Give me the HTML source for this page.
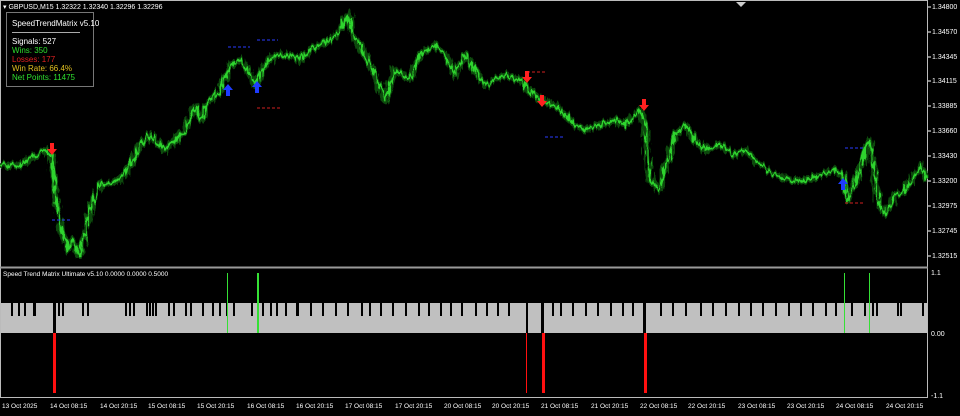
<!DOCTYPE html>
<html><head><meta charset="utf-8"><style>
body{margin:0;background:#000;width:960px;height:411px;overflow:hidden;font-family:"Liberation Sans",sans-serif}
svg text{font-family:"Liberation Sans",sans-serif}
</style></head><body>
<svg width="960" height="411" viewBox="0 0 960 411" xmlns="http://www.w3.org/2000/svg">
<defs>
<filter id="jag" x="-5%" y="-20%" width="110%" height="140%">
<feTurbulence type="fractalNoise" baseFrequency="0.35 0.08" numOctaves="2" seed="3"/>
<feDisplacementMap in="SourceGraphic" scale="10" xChannelSelector="R" yChannelSelector="G"/>
</filter>
</defs>
<rect width="960" height="411" fill="#000"/>
<rect x="0.5" y="0.5" width="927" height="397" fill="none" stroke="#bbb" stroke-width="1"/>
<line x1="0" y1="267.5" x2="928" y2="267.5" stroke="#9a9a9a" stroke-width="2"/>
<g fill="none" stroke-linejoin="round" filter="url(#jag)">
<polyline stroke="#0b4a0b" stroke-width="7" points="0,165 20,165 45,150 52,155 55,190 60,225 68,250 72,240 80,255 90,210 100,185 120,180 130,165 140,145 150,135 165,150 175,140 185,130 195,105 200,120 210,100 220,90 230,65 240,60 250,75 255,85 265,65 275,55 290,55 300,60 310,50 320,45 330,40 340,30 348,15 355,40 365,55 375,75 385,100 395,70 410,80 420,55 435,45 445,55 455,75 465,55 475,70 485,85 495,80 505,75 520,80 530,90 540,100 555,105 565,115 575,125 585,130 600,125 615,120 625,125 640,110 645,125 650,180 660,190 665,170 675,135 685,125 695,140 705,150 720,145 735,155 745,150 760,165 775,175 790,180 805,180 820,175 835,170 843,175 848,200 855,185 865,150 870,140 878,200 885,215 895,195 905,190 915,175 920,165 927,180"/>
<polyline stroke="#2fd42f" stroke-width="2.5" points="0,165 20,165 45,150 52,155 55,190 60,225 68,250 72,240 80,255 90,210 100,185 120,180 130,165 140,145 150,135 165,150 175,140 185,130 195,105 200,120 210,100 220,90 230,65 240,60 250,75 255,85 265,65 275,55 290,55 300,60 310,50 320,45 330,40 340,30 348,15 355,40 365,55 375,75 385,100 395,70 410,80 420,55 435,45 445,55 455,75 465,55 475,70 485,85 495,80 505,75 520,80 530,90 540,100 555,105 565,115 575,125 585,130 600,125 615,120 625,125 640,110 645,125 650,180 660,190 665,170 675,135 685,125 695,140 705,150 720,145 735,155 745,150 760,165 775,175 790,180 805,180 820,175 835,170 843,175 848,200 855,185 865,150 870,140 878,200 885,215 895,195 905,190 915,175 920,165 927,180"/>
</g>
<g stroke-width="1" stroke-dasharray="3,2">
<line x1="228" y1="47" x2="250" y2="47" stroke="#2a3cff"/>
<line x1="257" y1="40" x2="278" y2="40" stroke="#2a3cff"/>
<line x1="52" y1="220" x2="72" y2="220" stroke="#2a3cff"/>
<line x1="545" y1="137" x2="565" y2="137" stroke="#2a3cff"/>
<line x1="845" y1="148" x2="865" y2="148" stroke="#2a3cff"/>
<line x1="257" y1="108" x2="280" y2="108" stroke="#d02020"/>
<line x1="845" y1="203" x2="865" y2="203" stroke="#d02020"/>
<line x1="527" y1="72" x2="547" y2="72" stroke="#d02020"/>
</g>
<g fill="#ff2020">
<path d="M50,143h4v6h3l-5,6l-5,-6h3z"/>
<path d="M525,71h4v6h3l-5,6l-5,-6h3z"/>
<path d="M540,95h4v6h3l-5,6l-5,-6h3z"/>
<path d="M642,99h4v6h3l-5,6l-5,-6h3z"/>
</g>
<g fill="#1e3cff">
<path d="M226,96h4v-6h3l-5,-6l-5,6h3z"/>
<path d="M255,93h4v-6h3l-5,-6l-5,6h3z"/>
<path d="M841,190h4v-6h3l-5,-6l-5,6h3z"/>
</g>
<rect x="6.5" y="12.5" width="87" height="74" fill="#000" stroke="#777"/>
<g font-size="8">
<text x="3" y="9" fill="#fff" font-size="7">▾ GBPUSD,M15  1.32322 1.32340 1.32296 1.32296</text>
<text x="12" y="26" fill="#fff">SpeedTrendMatrix v5.10</text>
<line x1="12" y1="32.5" x2="80" y2="32.5" stroke="#aaa"/>
<text x="12" y="44" fill="#fff">Signals: 527</text>
<text x="12" y="53" fill="#2ee02e">Wins: 350</text>
<text x="12" y="62" fill="#e02020">Losses: 177</text>
<text x="12" y="71" fill="#e0c020">Win Rate: 66.4%</text>
<text x="12" y="80" fill="#2ee02e">Net Points: 11475</text>
</g>
<polygon points="736,2 746,2 741,7" fill="#ccc"/>
<rect x="1" y="303" width="926" height="30" fill="#c0c0c0"/>
<g fill="#000">
<rect x="11" y="303" width="2" height="13"/><rect x="18" y="303" width="2" height="13"/><rect x="24" y="303" width="2" height="13"/><rect x="33" y="303" width="3" height="13"/>
<rect x="53" y="303" width="3" height="30"/><rect x="58" y="303" width="2" height="13"/><rect x="62" y="303" width="2" height="13"/><rect x="82" y="303" width="2" height="13"/><rect x="87" y="303" width="2" height="13"/>
<rect x="125" y="303" width="2" height="13"/><rect x="129" y="303" width="2" height="13"/><rect x="133" y="303" width="2" height="13"/><rect x="146" y="303" width="2" height="13"/><rect x="149" y="303" width="2" height="13"/><rect x="152" y="303" width="2" height="13"/><rect x="155" y="303" width="2" height="13"/><rect x="168" y="303" width="2" height="13"/><rect x="173" y="303" width="2" height="13"/><rect x="185" y="303" width="2" height="13"/><rect x="190" y="303" width="2" height="13"/><rect x="202" y="303" width="2" height="13"/><rect x="212" y="303" width="2" height="13"/><rect x="219" y="303" width="2" height="13"/><rect x="226" y="303" width="2" height="13"/><rect x="233" y="303" width="2" height="13"/>
<rect x="251" y="303" width="2" height="13"/><rect x="262" y="303" width="2" height="13"/><rect x="270" y="303" width="2" height="13"/><rect x="276" y="303" width="2" height="13"/><rect x="285" y="303" width="2" height="13"/><rect x="296" y="303" width="3" height="13"/>
<rect x="310" y="303" width="2" height="13"/><rect x="322" y="303" width="2" height="13"/><rect x="335" y="303" width="2" height="13"/><rect x="347" y="303" width="2" height="13"/><rect x="361" y="303" width="2" height="13"/><rect x="369" y="303" width="2" height="13"/><rect x="380" y="303" width="2" height="13"/><rect x="392" y="303" width="2" height="13"/><rect x="405" y="303" width="2" height="13"/><rect x="418" y="303" width="2" height="13"/><rect x="428" y="303" width="2" height="13"/><rect x="440" y="303" width="2" height="13"/><rect x="450" y="303" width="2" height="13"/><rect x="461" y="303" width="2" height="13"/><rect x="475" y="303" width="2" height="13"/><rect x="486" y="303" width="2" height="13"/><rect x="497" y="303" width="2" height="13"/><rect x="508" y="303" width="2" height="13"/>
<rect x="526" y="303" width="2" height="30"/><rect x="541" y="303" width="3" height="30"/><rect x="552" y="303" width="2" height="13"/><rect x="560" y="303" width="2" height="13"/><rect x="572" y="303" width="2" height="13"/><rect x="585" y="303" width="2" height="13"/><rect x="597" y="303" width="2" height="13"/><rect x="610" y="303" width="2" height="13"/><rect x="622" y="303" width="2" height="13"/><rect x="632" y="303" width="2" height="13"/>
<rect x="643" y="303" width="3" height="30"/><rect x="660" y="303" width="2" height="13"/><rect x="672" y="303" width="2" height="13"/><rect x="685" y="303" width="2" height="13"/><rect x="700" y="303" width="2" height="13"/><rect x="712" y="303" width="2" height="13"/><rect x="725" y="303" width="2" height="13"/><rect x="738" y="303" width="2" height="13"/><rect x="750" y="303" width="2" height="13"/><rect x="762" y="303" width="2" height="13"/><rect x="775" y="303" width="2" height="13"/><rect x="788" y="303" width="2" height="13"/><rect x="800" y="303" width="2" height="13"/><rect x="812" y="303" width="2" height="13"/><rect x="825" y="303" width="2" height="13"/><rect x="835" y="303" width="2" height="13"/>
<rect x="851" y="303" width="2" height="13"/><rect x="864" y="303" width="2" height="13"/><rect x="872" y="303" width="2" height="13"/><rect x="876" y="303" width="2" height="13"/><rect x="897" y="303" width="2" height="13"/><rect x="900" y="303" width="2" height="13"/><rect x="922" y="303" width="2" height="13"/>
</g>
<g fill="#ff1010">
<rect x="53" y="333" width="3" height="60"/><rect x="526" y="333" width="1" height="60"/><rect x="542" y="333" width="3" height="60"/><rect x="644" y="333" width="3" height="60"/>
</g>
<g fill="#35e035">
<rect x="227" y="273" width="1" height="60"/><rect x="257" y="273" width="2" height="60"/><rect x="844" y="273" width="1" height="60"/><rect x="869" y="273" width="1" height="60"/>
</g>
<text x="3" y="276" fill="#fff" font-size="6.5">Speed Trend Matrix Ultimate v5.10 0.0000 0.0000 0.5000</text>
<g fill="#fff" font-size="7">
<text x="932" y="9">1.34800</text><text x="932" y="34">1.34570</text><text x="932" y="59">1.34345</text><text x="932" y="83">1.34115</text><text x="932" y="108">1.33885</text><text x="932" y="133">1.33660</text><text x="932" y="158">1.33430</text><text x="932" y="183">1.33200</text><text x="932" y="208">1.32975</text><text x="932" y="233">1.32745</text><text x="932" y="258">1.32515</text>
<text x="931" y="275">1.1</text><text x="931" y="336">0.00</text><text x="931" y="398">-1.1</text>
</g>
<g stroke="#fff"><line x1="928" y1="7" x2="931" y2="7"/><line x1="928" y1="32" x2="931" y2="32"/><line x1="928" y1="57" x2="931" y2="57"/><line x1="928" y1="81" x2="931" y2="81"/><line x1="928" y1="106" x2="931" y2="106"/><line x1="928" y1="131" x2="931" y2="131"/><line x1="928" y1="156" x2="931" y2="156"/><line x1="928" y1="181" x2="931" y2="181"/><line x1="928" y1="206" x2="931" y2="206"/><line x1="928" y1="231" x2="931" y2="231"/><line x1="928" y1="256" x2="931" y2="256"/></g>
<g fill="#fff" font-size="6.5">
<text x="2" y="408">13 Oct 2025</text><text x="50" y="408">14 Oct 08:15</text><text x="100" y="408">14 Oct 20:15</text><text x="148" y="408">15 Oct 08:15</text><text x="197" y="408">15 Oct 20:15</text><text x="247" y="408">16 Oct 08:15</text><text x="296" y="408">16 Oct 20:15</text><text x="345" y="408">17 Oct 08:15</text><text x="395" y="408">17 Oct 20:15</text><text x="444" y="408">20 Oct 08:15</text><text x="492" y="408">20 Oct 20:15</text><text x="541" y="408">21 Oct 08:15</text><text x="591" y="408">21 Oct 20:15</text><text x="640" y="408">22 Oct 08:15</text><text x="688" y="408">22 Oct 20:15</text><text x="738" y="408">23 Oct 08:15</text><text x="787" y="408">23 Oct 20:15</text><text x="836" y="408">24 Oct 08:15</text><text x="886" y="408">24 Oct 20:15</text>
</g>
</svg>
</body></html>
